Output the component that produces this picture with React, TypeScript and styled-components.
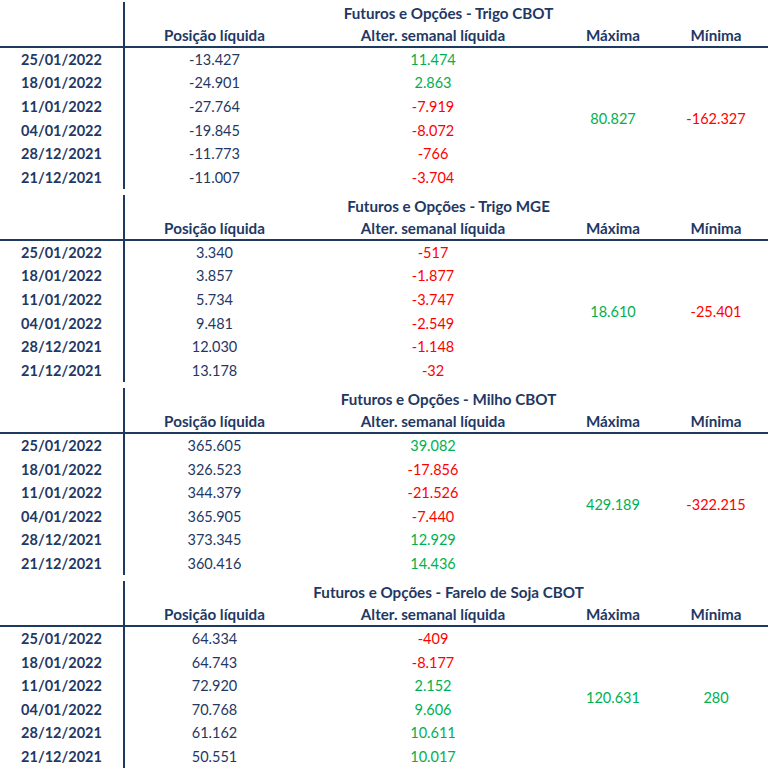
import React from "react";
import styled, { createGlobalStyle } from "styled-components";

const GlobalStyle = createGlobalStyle`
  html, body { margin: 0; padding: 0; background: #ffffff; }
  body { font-family: Lato, "Liberation Sans", sans-serif; }
`;

const NAVY = "#1f3864";
const LINE = "#1f3a5f";
const GREEN = "#00b050";
const RED = "#ff0000";

const Page = styled.div`
  width: 772px;
  padding-top: 2px;
  display: flex;
  flex-direction: column;
  gap: 6px;
`;

const Section = styled.section`
  width: 768px;
  display: grid;
  grid-template-columns: 125px 179px 258px 102px 104px;
  grid-template-rows: 21.5px 24px repeat(6, 23.6px);
  font-size: 14.5px;
  color: ${NAVY};
`;

const Cell = styled.div<{ $bold?: boolean; $color?: string }>`
  display: flex;
  align-items: center;
  justify-content: center;
  white-space: nowrap;
  font-weight: ${(p) => (p.$bold ? 700 : 400)};
  color: ${(p) => p.$color || NAVY};
`;

const SideCell = styled(Cell)`
  border-right: 2px solid ${LINE};
`;

const Title = styled(Cell)`
  grid-column: 2 / 6;
  font-weight: 700;
  font-size: 15.2px;
  padding-left: 4px;
`;

const HeaderCell = styled(Cell)`
  font-weight: 700;
  font-size: 15.2px;
  border-bottom: 2px solid ${LINE};
`;

const HeaderSide = styled(HeaderCell)`
  border-right: 2px solid ${LINE};
`;

const SpanCell = styled(Cell)<{ $col: number }>`
  grid-column: ${(p) => p.$col};
  grid-row: 3 / 9;
`;

const DATES = ["25/01/2022", "18/01/2022", "11/01/2022", "04/01/2022", "28/12/2021", "21/12/2021"];

type Block = {
  title: string;
  pos: string[];
  alt: string[];
  max: string;
  min: string;
};

const BLOCKS: Block[] = [
  {
    title: "Futuros e Opções - Trigo CBOT",
    pos: ["-13.427", "-24.901", "-27.764", "-19.845", "-11.773", "-11.007"],
    alt: ["11.474", "2.863", "-7.919", "-8.072", "-766", "-3.704"],
    max: "80.827",
    min: "-162.327",
  },
  {
    title: "Futuros e Opções - Trigo MGE",
    pos: ["3.340", "3.857", "5.734", "9.481", "12.030", "13.178"],
    alt: ["-517", "-1.877", "-3.747", "-2.549", "-1.148", "-32"],
    max: "18.610",
    min: "-25.401",
  },
  {
    title: "Futuros e Opções - Milho CBOT",
    pos: ["365.605", "326.523", "344.379", "365.905", "373.345", "360.416"],
    alt: ["39.082", "-17.856", "-21.526", "-7.440", "12.929", "14.436"],
    max: "429.189",
    min: "-322.215",
  },
  {
    title: "Futuros e Opções - Farelo de Soja CBOT",
    pos: ["64.334", "64.743", "72.920", "70.768", "61.162", "50.551"],
    alt: ["-409", "-8.177", "2.152", "9.606", "10.611", "10.017"],
    max: "120.631",
    min: "280",
  },
];

const signColor = (v: string) => (v.startsWith("-") ? RED : GREEN);

function Table({ block }: { block: Block }) {
  return (
    <Section>
      <SideCell />
      <Title>{block.title}</Title>
      <HeaderSide />
      <HeaderCell>Posição líquida</HeaderCell>
      <HeaderCell>Alter. semanal líquida</HeaderCell>
      <HeaderCell>Máxima</HeaderCell>
      <HeaderCell>Mínima</HeaderCell>
      {DATES.map((d, i) => (
        <React.Fragment key={d}>
          <SideCell $bold>{d}</SideCell>
          <Cell>{block.pos[i]}</Cell>
          <Cell $color={signColor(block.alt[i])}>{block.alt[i]}</Cell>
        </React.Fragment>
      ))}
      <SpanCell $col={4} $color={signColor(block.max)}>{block.max}</SpanCell>
      <SpanCell $col={5} $color={signColor(block.min)}>{block.min}</SpanCell>
    </Section>
  );
}

export default function App() {
  return (
    <>
      <GlobalStyle />
      <Page>
        {BLOCKS.map((b) => (
          <Table key={b.title} block={b} />
        ))}
      </Page>
    </>
  );
}
